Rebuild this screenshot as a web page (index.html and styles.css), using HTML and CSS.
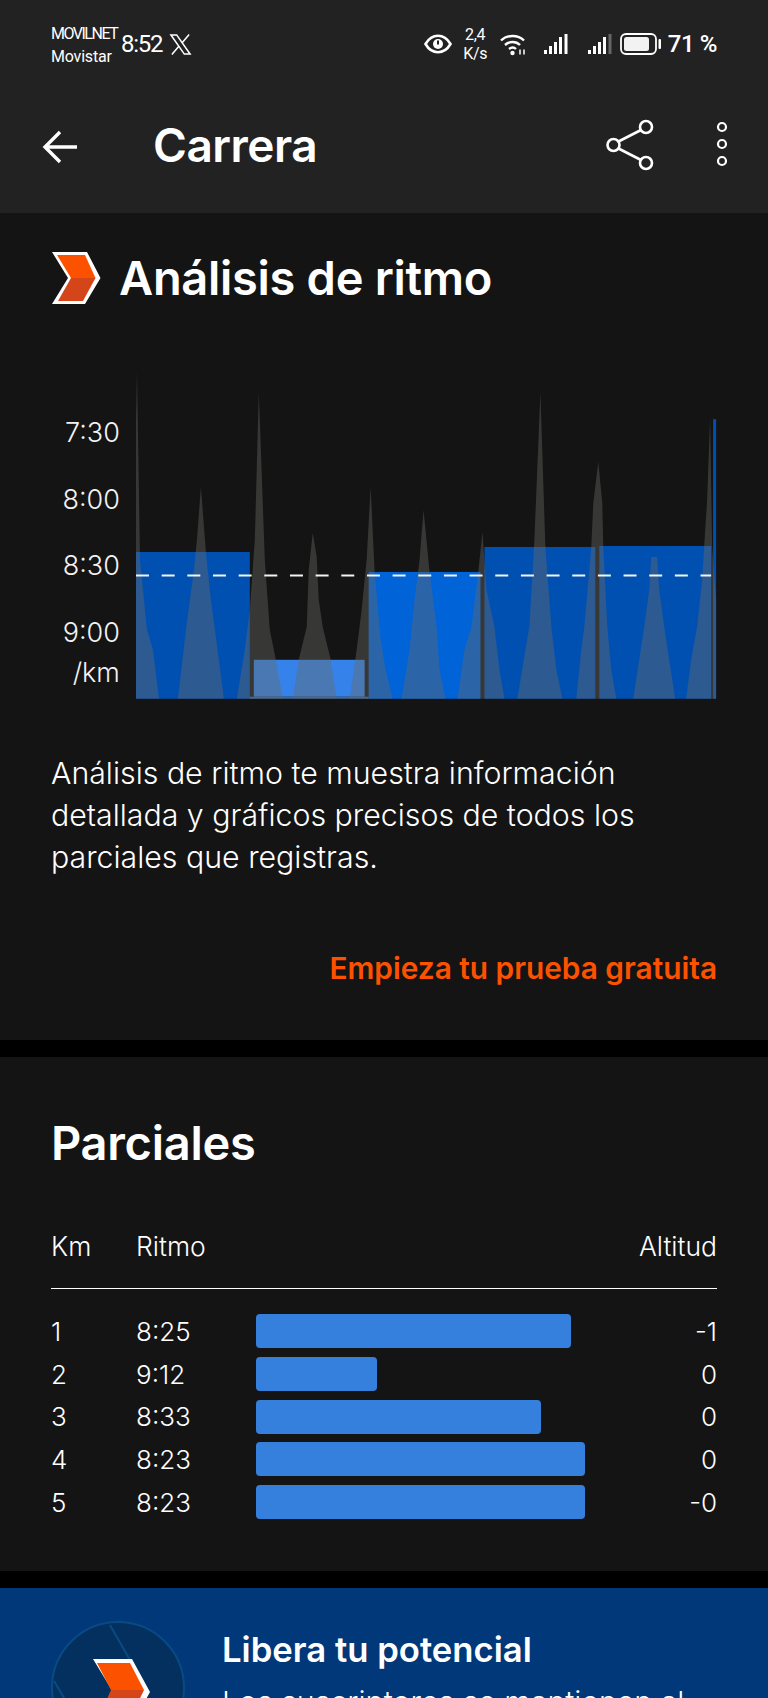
FILE: index.html
```html
<!DOCTYPE html>
<html lang="es">
<head>
<meta charset="utf-8">
<title>Carrera</title>
<link rel="stylesheet" href="styles.css">
</head>
<body>
<div class="page">
  <header class="topbar">
    <div class="status">
      <div class="carriers"><span class="c1">MOVILNET</span><span class="c2">Movistar</span></div>
      <span class="clock">8:52</span>
      <svg class="x-logo" viewBox="0 0 24 24" width="23" height="23"><path d="M2 2h6l14 20h-6z" fill="none" stroke="#fff" stroke-width="1.600"/><path d="M21 1.500 13.500 10.500M10.500 13.500 3 22.500" fill="none" stroke="#fff" stroke-width="1.600"/></svg>
      <div class="status-right">
        <svg class="eye" viewBox="0 0 28 20" width="28" height="20"><path d="M1.500 10C5 4 9 1.800 14 1.800S23 4 26.500 10C23 16 19 18.200 14 18.200S5 16 1.500 10Z" fill="none" stroke="#fff" stroke-width="2.600"/><circle cx="14" cy="10" r="5" fill="#fff"/><rect x="13" y="6.500" width="2" height="4" fill="#222"/></svg>
        <div class="speed"><span>2,4</span><span>K/s</span></div>
        <svg class="wifi" viewBox="0 0 28 24" width="28" height="24"><g fill="none" stroke="#fff" stroke-width="2.400"><path d="M2 8.500C8 2.500 19 2.500 25 8.500"/><path d="M6 13C10.500 9 17 9 21 13"/><path d="M10 17C12.500 15 15 15 17 17"/></g><circle cx="13.500" cy="21" r="2.200" fill="#fff"/><path d="M21 22.500v-5M25 22.500v-5" stroke="#fff" stroke-width="1.500"/></svg>
        <svg class="signal" viewBox="0 0 24 24" width="24" height="24"><g fill="#fff"><rect x="0" y="18" width="3" height="4"/><rect x="5" y="14" width="3" height="8"/><rect x="10" y="10" width="3" height="12"/><rect x="15" y="5" width="3" height="17"/><rect x="20.500" y="2" width="3" height="20"/></g></svg>
        <svg class="signal two" viewBox="0 0 24 24" width="24" height="24"><g fill="#fff"><rect x="0" y="18" width="3" height="4"/><rect x="5" y="14" width="3" height="8"/><rect x="10" y="10" width="3" height="12"/><rect x="15" y="5" width="3" height="17"/></g><rect x="20.500" y="2" width="3" height="20" fill="#666"/></svg>
        <svg class="battery" viewBox="0 0 41 24" width="41" height="24"><rect x="1" y="2" width="35" height="20" rx="5" fill="none" stroke="#fff" stroke-width="1.800"/><rect x="4" y="5" width="25" height="14" rx="2.500" fill="#f2f2f2"/><rect x="38.500" y="7" width="2.500" height="10" rx="1" fill="#fff"/></svg>
        <span class="pct">71 %</span>
      </div>
    </div>
    <div class="appbar">
      <svg class="back" viewBox="0 0 36 36" width="36" height="36"><path d="M35 18H3M18 3 3 18 18 33" fill="none" stroke="#fff" stroke-width="3.400"/></svg>
      <h1 class="title">Carrera</h1>
      <svg class="share" viewBox="0 0 48 52" width="48" height="52"><g fill="none" stroke="#fff" stroke-width="2.600"><circle cx="7.500" cy="26" r="6"/><circle cx="40" cy="8" r="6"/><circle cx="40" cy="44" r="6"/><path d="M12.500 22.500 35 11M12.500 29.500 35 41"/></g></svg>
      <svg class="more" viewBox="0 0 12 48" width="12" height="48"><g fill="none" stroke="#fff" stroke-width="2.200"><circle cx="6" cy="7" r="4"/><circle cx="6" cy="24" r="4"/><circle cx="6" cy="41" r="4"/></g></svg>
    </div>
  </header>

  <section class="card analysis">
    <div class="heading-row">
      <svg class="chevron" viewBox="0 0 49 52" width="49" height="52"><path d="M0 0H35L48.500 26 33 52H0L16 26Z" fill="#fff"/><path d="M5 3H33L43.500 26H19Z" fill="#fc5200"/><path d="M19 26H43.500L31 49H6Z" fill="#d4461a"/></svg>
      <h2 class="h-large">Análisis de ritmo</h2>
    </div>
    <div class="chart">
      <div class="axis"><span>7:30</span><span>8:00</span><span>8:30</span><span>9:00</span><span class="unit">/km</span></div>
      <svg class="plot" viewBox="136 360 582 340" width="582" height="340">
        <g>
          <rect x="136" y="552" width="114" height="147" fill="#0050b2"/>
          <rect x="254" y="660" width="111" height="37" fill="#3583ea"/>
          <rect x="369" y="572" width="112" height="127" fill="#0063d8"/>
          <rect x="485" y="547" width="111" height="152" fill="#0050b2"/>
          <rect x="600" y="546" width="112" height="153" fill="#0050b2"/>
          <rect x="714" y="419" width="3" height="280" fill="#0050b2"/>
        </g>
        <path class="spikes" d="M136 699V420L137 370 140 560 147 630 153 650 159 699Z
          M178 699 186 630 194 570 197 540 201 487 206 552 211 600 215 630 224 699Z
          M237 699 245 650 250 610 255 540 259 392 265 560 270 630 276 660 283 699Z
          M293 699 299 660 307 627 309 570 313 533 317 557 319 600 323 627 331 660 337 699Z
          M350 699 357 650 362 610 367 560 371 487 375 572 381 640 386 670 393 699Z
          M402 699 410 650 415 600 420 560 424 510 430 572 437 627 440 670 446 699Z
          M458 699 465 650 472 627 479 570 483 532 487 590 495 627 500 670 505 699Z
          M518 699 526 650 530 627 535 540 541 392 546 547 552 627 557 670 563 699Z
          M577 699 582 650 585 627 592 547 594 503 599 462 603 503 604 547 608 627 612 670 617 699Z
          M634 699 640 660 645 627 650 590 652 557 658 557 660 590 665 627 670 660 676 699Z
          M687 699 692 660 698 627 703 580 705 547 708 500 711 417 713 547 717 600V699Z"/>
        <rect class="base" x="250" y="697" width="119" height="2"/>
        <line class="dash" x1="136" y1="575.500" x2="712" y2="575.500"/>
      </svg>
    </div>
    <p class="desc">Análisis de ritmo te muestra información detallada y gráficos precisos de todos los parciales que registras.</p>
    <a class="cta">Empieza tu prueba gratuita</a>
  </section>

  <section class="card splits">
    <h2 class="h-large">Parciales</h2>
    <div class="row head"><span>Km</span><span>Ritmo</span><span></span><span class="alt">Altitud</span></div>
    <div class="rows">
      <div class="row"><span>1</span><span>8:25</span><div class="track"><div class="bar" style="width:315px"></div></div><span class="alt">-1</span></div>
      <div class="row"><span>2</span><span>9:12</span><div class="track"><div class="bar" style="width:121px"></div></div><span class="alt">0</span></div>
      <div class="row"><span>3</span><span>8:33</span><div class="track"><div class="bar" style="width:285px"></div></div><span class="alt">0</span></div>
      <div class="row"><span>4</span><span>8:23</span><div class="track"><div class="bar" style="width:329px"></div></div><span class="alt">0</span></div>
      <div class="row"><span>5</span><span>8:23</span><div class="track"><div class="bar" style="width:329px"></div></div><span class="alt">-0</span></div>
    </div>
  </section>

  <section class="promo">
    <svg class="badge" viewBox="0 0 134 134" width="134" height="134">
      <circle cx="67" cy="67" r="66" fill="#04305f" stroke="#0a4a83" stroke-width="2"/>
      <path d="M59 4 79 39M3 60 22 92" stroke="#0a4a83" stroke-width="2" fill="none"/>
      <path d="M42 38H81L99 71 81 104H42L62 71Z" fill="#fff"/>
      <path d="M46 42H79L93 69H60Z" fill="#fc5200"/>
      <path d="M60 69H93L78 100H46Z" fill="#d4461a"/>
    </svg>
    <div class="promo-text">
      <h3>Libera tu potencial</h3>
      <p>Los suscriptores se mantienen al</p>
    </div>
  </section>
</div>
</body>
</html>
```
FILE: styles.css
```css
* { box-sizing: border-box; }
html, body { margin: 0; padding: 0; background: #000; }
.page {
  width: 768px; height: 1698px; overflow: hidden;
  font-family: Inter, "Liberation Sans", sans-serif;
  color: #fff; background: #000;
}
.topbar { background: #222; height: 213px; padding: 0 40px 0 51px; }
.status { display: flex; align-items: center; height: 88px; }
.carriers { display: flex; flex-direction: column; gap: 6px; font: 400 16px/17px Roboto, sans-serif; width: 70px; margin-top: 1px; }
.c1 { letter-spacing: -1.500px; }
.c2 { letter-spacing: -.2px; }
.clock { font: 400 24px/1 Roboto, sans-serif; letter-spacing: -1.300px; }
.x-logo { margin-left: 7px; }
.status-right { margin-left: auto; display: flex; align-items: center; margin-right: 11px; }
.eye { margin-right: 10px; }
.speed { display: flex; flex-direction: column; align-items: center; width: 27px; font: 400 16px/19px Roboto, sans-serif; letter-spacing: -.3px; margin-right: 10px; }
.wifi { margin-right: 17px; }
.signal { margin-right: 20px; }
.signal.two { margin-right: 8px; }
.battery { margin-right: 7px; }
.pct { font: 500 24px/1 Roboto, sans-serif; letter-spacing: -.4px; }
.appbar { display: flex; align-items: center; height: 117px; margin-left: -9px; }
.back { margin-right: 76px; margin-left: 0; }
.title { margin: 0 0 3px -1px; font-size: 46px; font-weight: 600; line-height: 1; letter-spacing: -.5px; }
.share { margin-left: auto; margin-right: 62px; margin-bottom: 4px; }
.more { margin-bottom: 6px; }

.card { background: #141414; }
.analysis { height: 827px; padding: 39px 51px 0; }
.heading-row { display: flex; align-items: center; gap: 18px; height: 52px; }
.chevron { margin-left: 1px; }
.h-large { margin: 0; font-size: 47px; font-weight: 600; line-height: 52px; letter-spacing: -.3px; }
.chart { display: flex; margin-top: 56px; height: 340px; }
.axis { width: 85px; display: flex; flex-direction: column; align-items: flex-end; padding: 56px 16px 0 0; font-size: 27px; font-weight: 300; line-height: 34px; gap: 32.500px; color: #f2f2f2; }
.axis .unit { margin-top: -26px; }
.plot { display: block; }
.spikes { fill: rgb(105,105,100); fill-opacity: .42; }
.base { fill: #47688f; }
.dash { stroke: #f4f4f4; stroke-width: 2; stroke-dasharray: 13 12.700; }
.desc { margin: 52px 0 0; font-size: 30.300px; line-height: 42.200px; font-weight: 300; width: 668px; }
.cta { display: block; text-align: right; margin-top: 69px; color: #fc5200; font-size: 29.800px; font-weight: 600; line-height: 40px; }

.splits { margin-top: 17px; height: 514px; padding: 60px 51px 0; }
.row { display: grid; grid-template-columns: 85px 120px 1fr auto; align-items: center; font-size: 26px; font-weight: 300; height: 42.700px; }
.head { margin-top: 58px; height: 38px; font-size: 26.500px; }
.rows { border-top: 1px solid #fff; margin-top: 23px; padding-top: 21px; }
.alt { text-align: right; }
.track { height: 34px; }
.bar { height: 100%; background: #3580dd; border-radius: 4px; }

.promo { margin-top: 17px; background: #00387a; height: 200px; padding: 33px 51px 0; display: flex; gap: 37px; align-items: flex-start; }
.badge { flex: none; }
.promo-text { padding-top: 7px; }
.promo-text h3 { margin: 0; font-size: 34.700px; font-weight: 600; line-height: 42px; }
.promo-text p { margin: 11px 0 0; font-size: 30.300px; line-height: 42px; font-weight: 300; white-space: nowrap; }
```
